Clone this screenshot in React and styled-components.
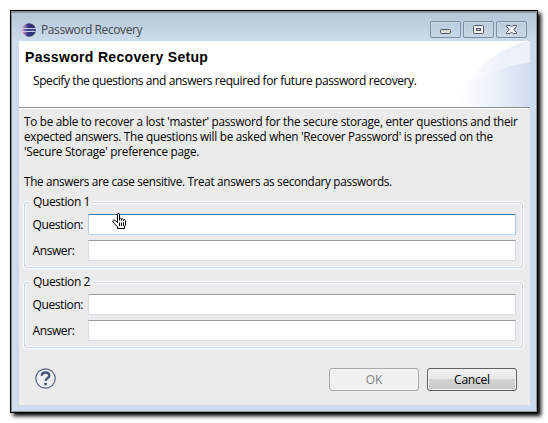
import React from 'react';
import styled, { createGlobalStyle } from 'styled-components';

const Global = createGlobalStyle`
  * { box-sizing: border-box; }
  body { margin: 0; background: #fff; font: 12px/15px "Open Sans", "Noto Sans", sans-serif; color: #000; }
`;

const Desktop = styled.div`
  width: 548px;
  height: 423px;
  padding: 10px;
  overflow: hidden;
`;

const Window = styled.div`
  width: 528px;
  height: 403px;
  border: 1px solid #000;
  background: linear-gradient(#b3c5d6, #cddcec 30px, #cddcec);
  box-shadow: 3px 3px 4px #000;
  position: relative;
`;

const Frame = styled.div`
  height: 401px;
  border: 1px solid #8e9299;
  border-top: 2px solid #8b9299;
  padding: 0 6px 6px 7px;
  display: flex;
  flex-direction: column;
`;

const TitleBar = styled.div`
  height: 28px;
  flex: none;
  display: flex;
  align-items: center;
  padding: 5px 3px 0 3px;
`;

const Title = styled.div`
  flex: 1;
  margin-left: 5px;
  color: #43474e;
  letter-spacing: -0.4px;
`;

const WindowButtons = styled.div`
  display: flex;
  gap: 2px;
`;

const WindowButton = styled.button`
  width: 31px;
  height: 17px;
  padding: 0;
  border: 1px solid #7e8da3;
  border-radius: 2px;
  background: linear-gradient(#b9cada, #c9d8e8);
  box-shadow: inset 0 0 0 1px #c9d7e5;
  svg { display: block; }
`;

const Header = styled.header`
  position: relative;
  height: 67px;
  flex: none;
  background: #fff;
  border-bottom: 1px solid #8e8e8e;
  margin-bottom: 1px;
  box-shadow: 0 1px #fff;
`;

const Swoosh = styled.svg`
  position: absolute;
  right: 0;
  top: 0;
`;

const Heading = styled.h1`
  position: relative;
  margin: 0;
  padding: 9px 0 0 6px;
  font: bold 14px/15px "Liberation Sans", Arial, sans-serif;
  letter-spacing: 0.32px;
`;

const Subtitle = styled.p`
  position: relative;
  margin: 8px 0 0 14px;
  letter-spacing: -0.415px;
`;

const Body = styled.main`
  flex: 1;
  background: #ebebeb;
  padding: 5px 6px 0 5px;
`;

const Line = styled.div`
  height: 15px;
  font-size: 11.7px;
  white-space: nowrap;
  letter-spacing: ${(p) => p.$spacing}px;
`;

const Paragraph = styled.div`
  margin-bottom: ${(p) => p.$gap}px;
`;

const Group = styled.section`
  width: 499px;
  height: 66px;
  margin-bottom: 14px;
  padding: 0 6px 0 7px;
  border: 1px solid #ccd7e1;
  border-radius: 3px;
  box-shadow: 0 0 0 1px #fbfcfc, inset 0 0 0 1px #f8fafa;
`;

const Legend = styled.div`
  width: max-content;
  height: 15px;
  margin: -9px 0 0 -3px;
  padding: 0 3px 0 4px;
  background: #ebebeb;
  letter-spacing: -0.4px;
`;

const Field = styled.label`
  display: flex;
  align-items: center;
  height: 21px;
  margin-top: 5px;
`;

const FieldName = styled.span`
  width: 56px;
  padding-left: 0.5px;
  white-space: nowrap;
  letter-spacing: -0.4px;
`;

const Input = styled.input`
  flex: none;
  width: 428px;
  height: 21px;
  background: #fff;
  border: 1px solid;
  border-color: ${(p) => (p.$active ? '#3d7bad #a4c9e3 #b7d9ed #b5cfe7' : '#989ba4 #d3d9e2 #dbe1e8 #d9dce4')};
  border-radius: 1px;
  outline: none;
`;

const Footer = styled.footer`
  display: flex;
  align-items: center;
  height: 23px;
  margin-top: 20px;
  padding: 0 7px 0 11px;
`;

const Spacer = styled.div`
  flex: 1;
`;

const HelpIcon = styled.svg`
  position: relative;
  top: -1px;
`;

const Button = styled.button`
  width: 90px;
  height: 23px;
  margin-left: 8px;
  padding: 0 0 1px;
  border-radius: 3px;
  font: inherit;
  letter-spacing: -0.2px;
  color: ${(p) => (p.disabled ? '#838383' : '#000')};
  border: 1px solid ${(p) => (p.disabled ? '#a4a9ac' : '#606060')};
  background: ${(p) =>
    p.disabled ? '#f0f0f0' : 'linear-gradient(#f2f2f2, #e8e8e8 48%, #d4d4d4 50%, #c8c8c8)'};
  box-shadow: inset 0 0 0 1px ${(p) => (p.disabled ? '#f4f4f4' : '#f3f3f3')};
`;

const Pointer = styled.svg`
  position: absolute;
  left: 101px;
  top: 202px;
`;

const Logo = () => (
  <svg width="14" height="14" viewBox="0 0 14 14">
    <defs>
      <linearGradient id="orb" x1="0" x2="1">
        <stop offset="0" stopColor="#e79bc6" />
        <stop offset=".2" stopColor="#8f78b4" />
        <stop offset=".42" stopColor="#37357f" />
        <stop offset="1" stopColor="#30306f" />
      </linearGradient>
    </defs>
    <circle cx="7" cy="7" r="6.8" fill="url(#orb)" />
    <path d="M1 5.5H13.5M1 8.5H13.5" stroke="#c3cbe9" strokeWidth="1" />
    <path d="M2 7H13.5" stroke="#55569c" strokeWidth="1" />
  </svg>
);

const Help = () => (
  <HelpIcon width="21" height="21" viewBox="0 0 21 21">
    <circle cx="10.5" cy="10.5" r="9.7" fill="#eceef1" stroke="#56657f" strokeWidth="1.2" />
    <path
      d="M6.7 7.8C6.8 5.6 8.2 4.5 10.6 4.5S14.3 5.8 14.3 7.7C14.3 10 10.6 10.1 10.6 13"
      fill="none"
      stroke="#465775"
      strokeWidth="2.3"
    />
    <rect x="9.2" y="14.7" width="2.8" height="2.6" rx=".7" fill="#465775" />
  </HelpIcon>
);

const Hand = () => (
  <Pointer width="16" height="18" viewBox="0 0 16 18">
    <path
      d="M5.5 9.8V1.5Q5.5.5 6.5.5T7.5 1.5V5.5Q8.5 4.6 9.5 6Q10.7 5.1 11.5 6.7Q13 5.9 13.5 7.5V12L12.5 13V15.5H5.5V13.8L2.5 10.8L.5 8Q1.5 6 3.5 7.7Z"
      fill="#fff"
      stroke="#000"
    />
    <path d="M7.5 9.5V13M9.5 9.5V13M11.5 9.5V13M7.5 5V7.5M9.5 6V7.5M11.5 7V8" stroke="#000" />
  </Pointer>
);

const groups = ['Question 1', 'Question 2'];

export default function App() {
  return (
    <Desktop>
      <Global />
      <Window>
        <Frame>
          <TitleBar>
            <Logo />
            <Title>Password Recovery</Title>
            <WindowButtons>
              <WindowButton aria-label="Minimize">
                <svg width="29" height="15">
                  <rect x="9.5" y="7.5" width="10" height="4" rx="1" fill="#d9d8cf" stroke="#535666" />
                </svg>
              </WindowButton>
              <WindowButton aria-label="Maximize">
                <svg width="29" height="15">
                  <rect x="9.5" y="3.5" width="10" height="8" rx="1" fill="#f2f2f2" stroke="#535666" />
                  <rect x="12.5" y="6.5" width="4" height="2" fill="#b8c9dc" stroke="#535666" />
                </svg>
              </WindowButton>
              <WindowButton aria-label="Close">
                <svg width="29" height="15">
                  <path
                    d="M9.5 3.5H13L14.5 5L16 3.5H19.5V4.5L16.8 7.5L19.5 10.5V11.5H16L14.5 10L13 11.5H9.5V10.5L12.2 7.5L9.5 4.5Z"
                    fill="#f5f5f5"
                    stroke="#535666"
                  />
                </svg>
              </WindowButton>
            </WindowButtons>
          </TitleBar>
          <Header>
            <Swoosh width="76" height="66" viewBox="0 0 76 66">
              <defs>
                <linearGradient id="outer" x1="0" x2="1">
                  <stop offset="0" stopColor="#fff" />
                  <stop offset="1" stopColor="#e3eaf7" />
                </linearGradient>
                <linearGradient id="inner" x1="0" x2="1">
                  <stop offset="0" stopColor="#fff" stopOpacity="0" />
                  <stop offset="1" stopColor="#d1ddf1" />
                </linearGradient>
              </defs>
              <path d="M0 67C14 36 36 8 76 0V67Z" fill="url(#outer)" />
              <path d="M38 35C47 18 58 5 76 0V22C60 24 48 29 38 35Z" fill="#edf2fa" opacity=".75" />
              <path d="M0 67C20 39 42 24 76 22V67Z" fill="url(#inner)" />
            </Swoosh>
            <Heading>Password Recovery Setup</Heading>
            <Subtitle>Specify the questions and answers required for future password recovery.</Subtitle>
          </Header>
          <Body>
            <Paragraph $gap={15}>
              <Line $spacing={-0.24}>
                To be able to recover a lost 'master' password for the secure storage, enter questions and their
              </Line>
              <Line $spacing={-0.243}>
                expected answers. The questions will be asked when 'Recover Password' is pressed on the
              </Line>
              <Line $spacing={-0.22}>'Secure Storage' preference page.</Line>
            </Paragraph>
            <Paragraph $gap={13}>
              <Line $spacing={-0.3}>The answers are case sensitive. Treat answers as secondary passwords.</Line>
            </Paragraph>
            {groups.map((name, i) => (
              <Group key={name}>
                <Legend>{name}</Legend>
                <Field>
                  <FieldName>Question:</FieldName>
                  <Input $active={i === 0} />
                </Field>
                <Field>
                  <FieldName>Answer:</FieldName>
                  <Input />
                </Field>
              </Group>
            ))}
            <Footer>
              <Help />
              <Spacer />
              <Button disabled>OK</Button>
              <Button>Cancel</Button>
            </Footer>
          </Body>
        </Frame>
        <Hand />
      </Window>
    </Desktop>
  );
}
